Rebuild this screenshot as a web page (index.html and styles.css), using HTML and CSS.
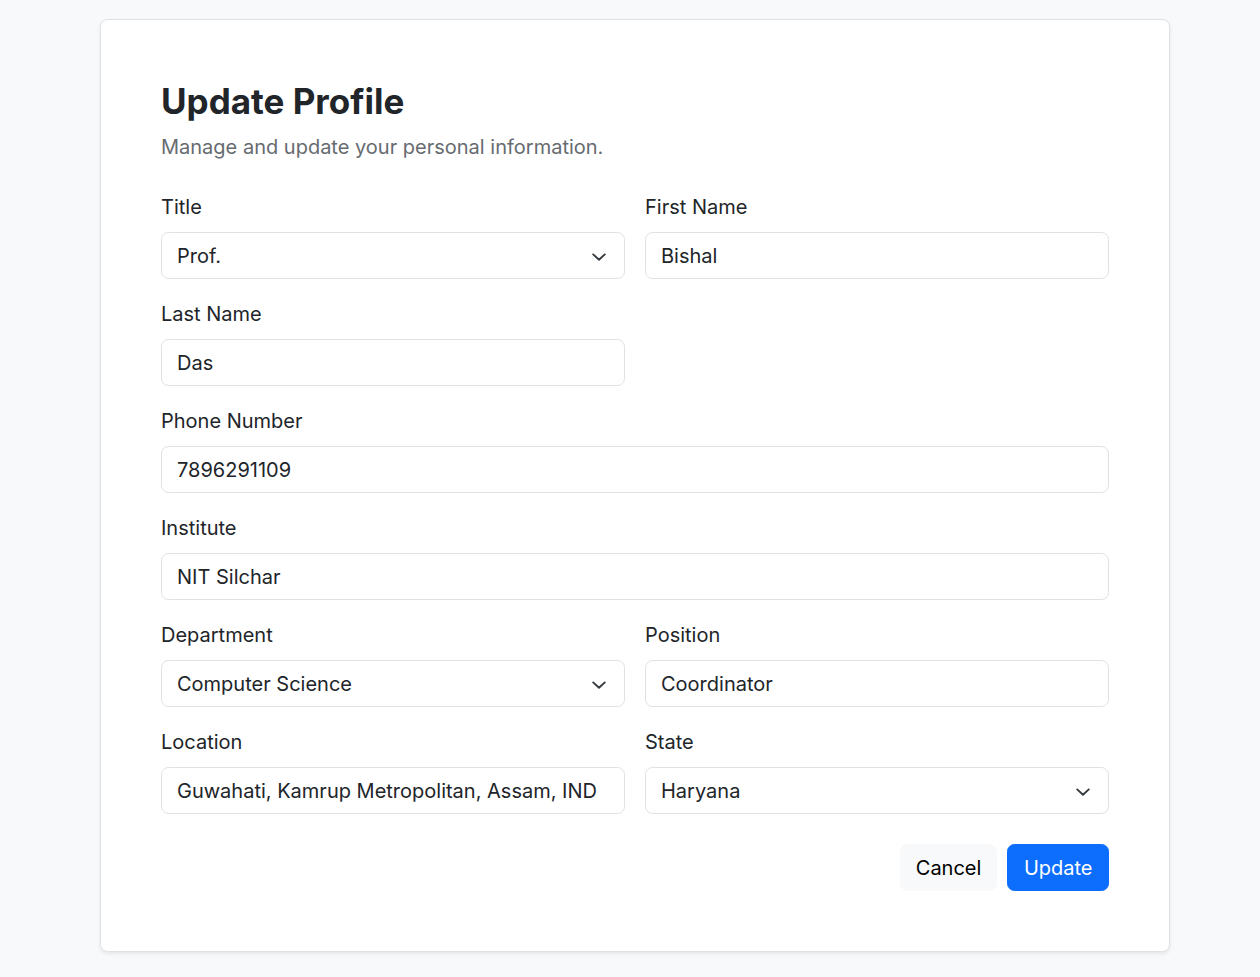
FILE: index.html
```html
<!DOCTYPE html>
<html lang="en">
<head>
<meta charset="utf-8">
<title>Update Profile</title>
<link rel="stylesheet" href="styles.css">
</head>
<body>
<div class="page">
  <div class="card">
    <h3 class="title">Update Profile</h3>
    <p class="subtitle">Manage and update your personal information.</p>
    <form class="form">
      <div class="grid">
        <div class="group">
          <label class="label">Title</label>
          <div class="select">
            <span>Prof.</span>
            <svg class="chev" width="14" height="8" viewBox="0 0 14 8"><path d="M1.2 1.4L7 6.8l5.8-5.4" fill="none" stroke="#343a40" stroke-width="1.9" stroke-linecap="round" stroke-linejoin="round"/></svg>
          </div>
        </div>
        <div class="group">
          <label class="label">First Name</label>
          <input class="control" type="text" value="Bishal">
        </div>
        <div class="group">
          <label class="label">Last Name</label>
          <input class="control" type="text" value="Das">
        </div>
        <div class="group"></div>
        <div class="group full">
          <label class="label">Phone Number</label>
          <input class="control" type="text" value="7896291109">
        </div>
        <div class="group full">
          <label class="label">Institute</label>
          <input class="control" type="text" value="NIT Silchar">
        </div>
        <div class="group">
          <label class="label">Department</label>
          <div class="select">
            <span>Computer Science</span>
            <svg class="chev" width="14" height="8" viewBox="0 0 14 8"><path d="M1.2 1.4L7 6.8l5.8-5.4" fill="none" stroke="#343a40" stroke-width="1.9" stroke-linecap="round" stroke-linejoin="round"/></svg>
          </div>
        </div>
        <div class="group">
          <label class="label">Position</label>
          <input class="control" type="text" value="Coordinator">
        </div>
        <div class="group">
          <label class="label">Location</label>
          <input class="control" type="text" value="Guwahati, Kamrup Metropolitan, Assam, IND">
        </div>
        <div class="group">
          <label class="label">State</label>
          <div class="select">
            <span>Haryana</span>
            <svg class="chev" width="14" height="8" viewBox="0 0 14 8"><path d="M1.2 1.4L7 6.8l5.8-5.4" fill="none" stroke="#343a40" stroke-width="1.9" stroke-linecap="round" stroke-linejoin="round"/></svg>
          </div>
        </div>
      </div>
      <div class="actions">
        <button type="button" class="btn btn-light">Cancel</button>
        <button type="button" class="btn btn-primary">Update</button>
      </div>
    </form>
  </div>
</div>
</body>
</html>
```
FILE: styles.css
```css
* { box-sizing: border-box; }
html, body {
  margin: 0;
  padding: 0;
  background: #f8f9fa;
}
body {
  font-family: Inter, "Noto Sans", "Liberation Sans", sans-serif;
  font-size: 20px;
  line-height: 1.5;
  color: #212529;
}
.page {
  padding: 19px 0 26px 100px;
}
.card {
  width: 1070px;
  background: #fff;
  border: 1px solid #dee2e6;
  border-radius: 7.5px;
  box-shadow: 0 2px 4px rgba(0, 0, 0, 0.075);
  padding: 60px;
}
.title {
  margin: 0 0 10px;
  font-size: 35px;
  font-weight: 700;
  line-height: 1.2;
  color: #212529;
}
.subtitle {
  margin: 0 0 30px;
  color: #666b70;
}
.grid {
  display: grid;
  grid-template-columns: 1fr 1fr;
  column-gap: 20px;
}
.group {
  margin-bottom: 20px;
}
.group.full {
  grid-column: 1 / span 2;
}
.label {
  display: block;
  margin-bottom: 10px;
}
.control, .select {
  display: block;
  width: 100%;
  height: 47px;
  padding: 7.5px 15px;
  font: inherit;
  color: #212529;
  background: #fff;
  border: 1px solid #dee2e6;
  border-radius: 7.5px;
  outline: none;
}
.select {
  display: flex;
  align-items: center;
  justify-content: space-between;
  padding-right: 18px;
}
.chev {
  display: block;
  flex: none;
  margin-top: 2px;
}
.actions {
  display: flex;
  justify-content: flex-end;
  gap: 10px;
  margin-top: 10px;
}
.btn {
  font: inherit;
  height: 47px;
  padding: 7.5px 15px;
  border-radius: 7.5px;
  border: 1px solid transparent;
  cursor: pointer;
}
.btn-light {
  background: #f8f9fa;
  border-color: #f8f9fa;
  color: #000;
}
.btn-primary {
  background: #0d6efd;
  border-color: #0d6efd;
  color: #fff;
  padding: 7.5px 15.5px;
}
```
